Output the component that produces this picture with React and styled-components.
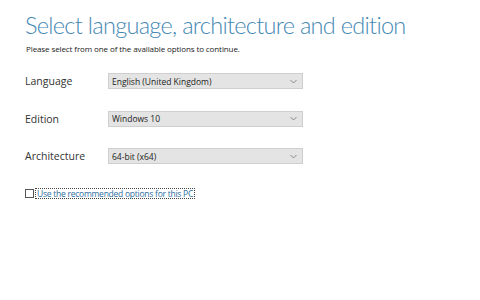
import styled, { createGlobalStyle } from 'styled-components';

const GlobalStyle = createGlobalStyle`
    html, body {
        margin: 0;
        padding: 0;
        background: #ffffff;
        font-family: 'Open Sans', 'Noto Sans', sans-serif;
    }
`;

const Page = styled.div`
    width: 480px;
    height: 300px;
    box-sizing: border-box;
    padding: 10px 0 0 25px;
    background: #ffffff;
`;

const Title = styled.h1`
    margin: 0;
    font-family: Lato, 'Open Sans', sans-serif;
    font-size: 23.5px;
    font-weight: 300;
    line-height: 31px;
    color: #4588b4;
    letter-spacing: -0.7px;
`;

const Subtitle = styled.p`
    margin: 2px 0 0 1px;
    font-size: 8px;
    line-height: 11px;
    color: #1a1a1a;
    letter-spacing: -0.1px;
`;

const Fields = styled.div`
    display: flex;
    flex-direction: column;
    gap: 21.5px;
    margin-top: 19px;
`;

const Field = styled.div`
    display: flex;
    align-items: center;
    height: 16px;
`;

const Label = styled.label`
    width: 83px;
    font-size: 10.5px;
    color: #333333;
`;

const Select = styled.div`
    display: flex;
    align-items: center;
    justify-content: space-between;
    box-sizing: border-box;
    width: 195px;
    height: 16px;
    padding: 0 5px 0 3px;
    background: #e4e4e4;
    border: 1px solid #cfcfcf;
    font-size: 8.5px;
    color: #222222;
`;

const Chevron = styled.svg`
    width: 7px;
    height: 5px;
`;

const Recommended = styled.div`
    display: flex;
    align-items: center;
    gap: 1px;
    margin-top: 24px;
`;

const Checkbox = styled.span`
    box-sizing: border-box;
    width: 9px;
    height: 9px;
    border: 1px solid #555555;
    background: #ffffff;
`;

const FocusText = styled.span`
    padding: 0 1px;
    border: 1px dotted #444444;
    font-size: 8.5px;
    line-height: 9px;
    color: #2e6f9e;
    letter-spacing: -0.25px;
`;

function Dropdown({ value }) {
    return (
        <Select>
            <span>{value}</span>
            <Chevron viewBox="0 0 7 5">
                <path d="M0.5 1 L3.5 4 L6.5 1" fill="none" stroke="#888" strokeWidth="1" />
            </Chevron>
        </Select>
    );
}

export default function App() {
    const fields = [
        { label: 'Language', value: 'English (United Kingdom)' },
        { label: 'Edition', value: 'Windows 10' },
        { label: 'Architecture', value: '64-bit (x64)' },
    ];

    return (
        <Page>
            <GlobalStyle />
            <Title>Select language, architecture and edition</Title>
            <Subtitle>Please select from one of the available options to continue.</Subtitle>
            <Fields>
                {fields.map((field) => (
                    <Field key={field.label}>
                        <Label>{field.label}</Label>
                        <Dropdown value={field.value} />
                    </Field>
                ))}
            </Fields>
            <Recommended>
                <Checkbox />
                <FocusText>Use the recommended options for this PC</FocusText>
            </Recommended>
        </Page>
    );
}
